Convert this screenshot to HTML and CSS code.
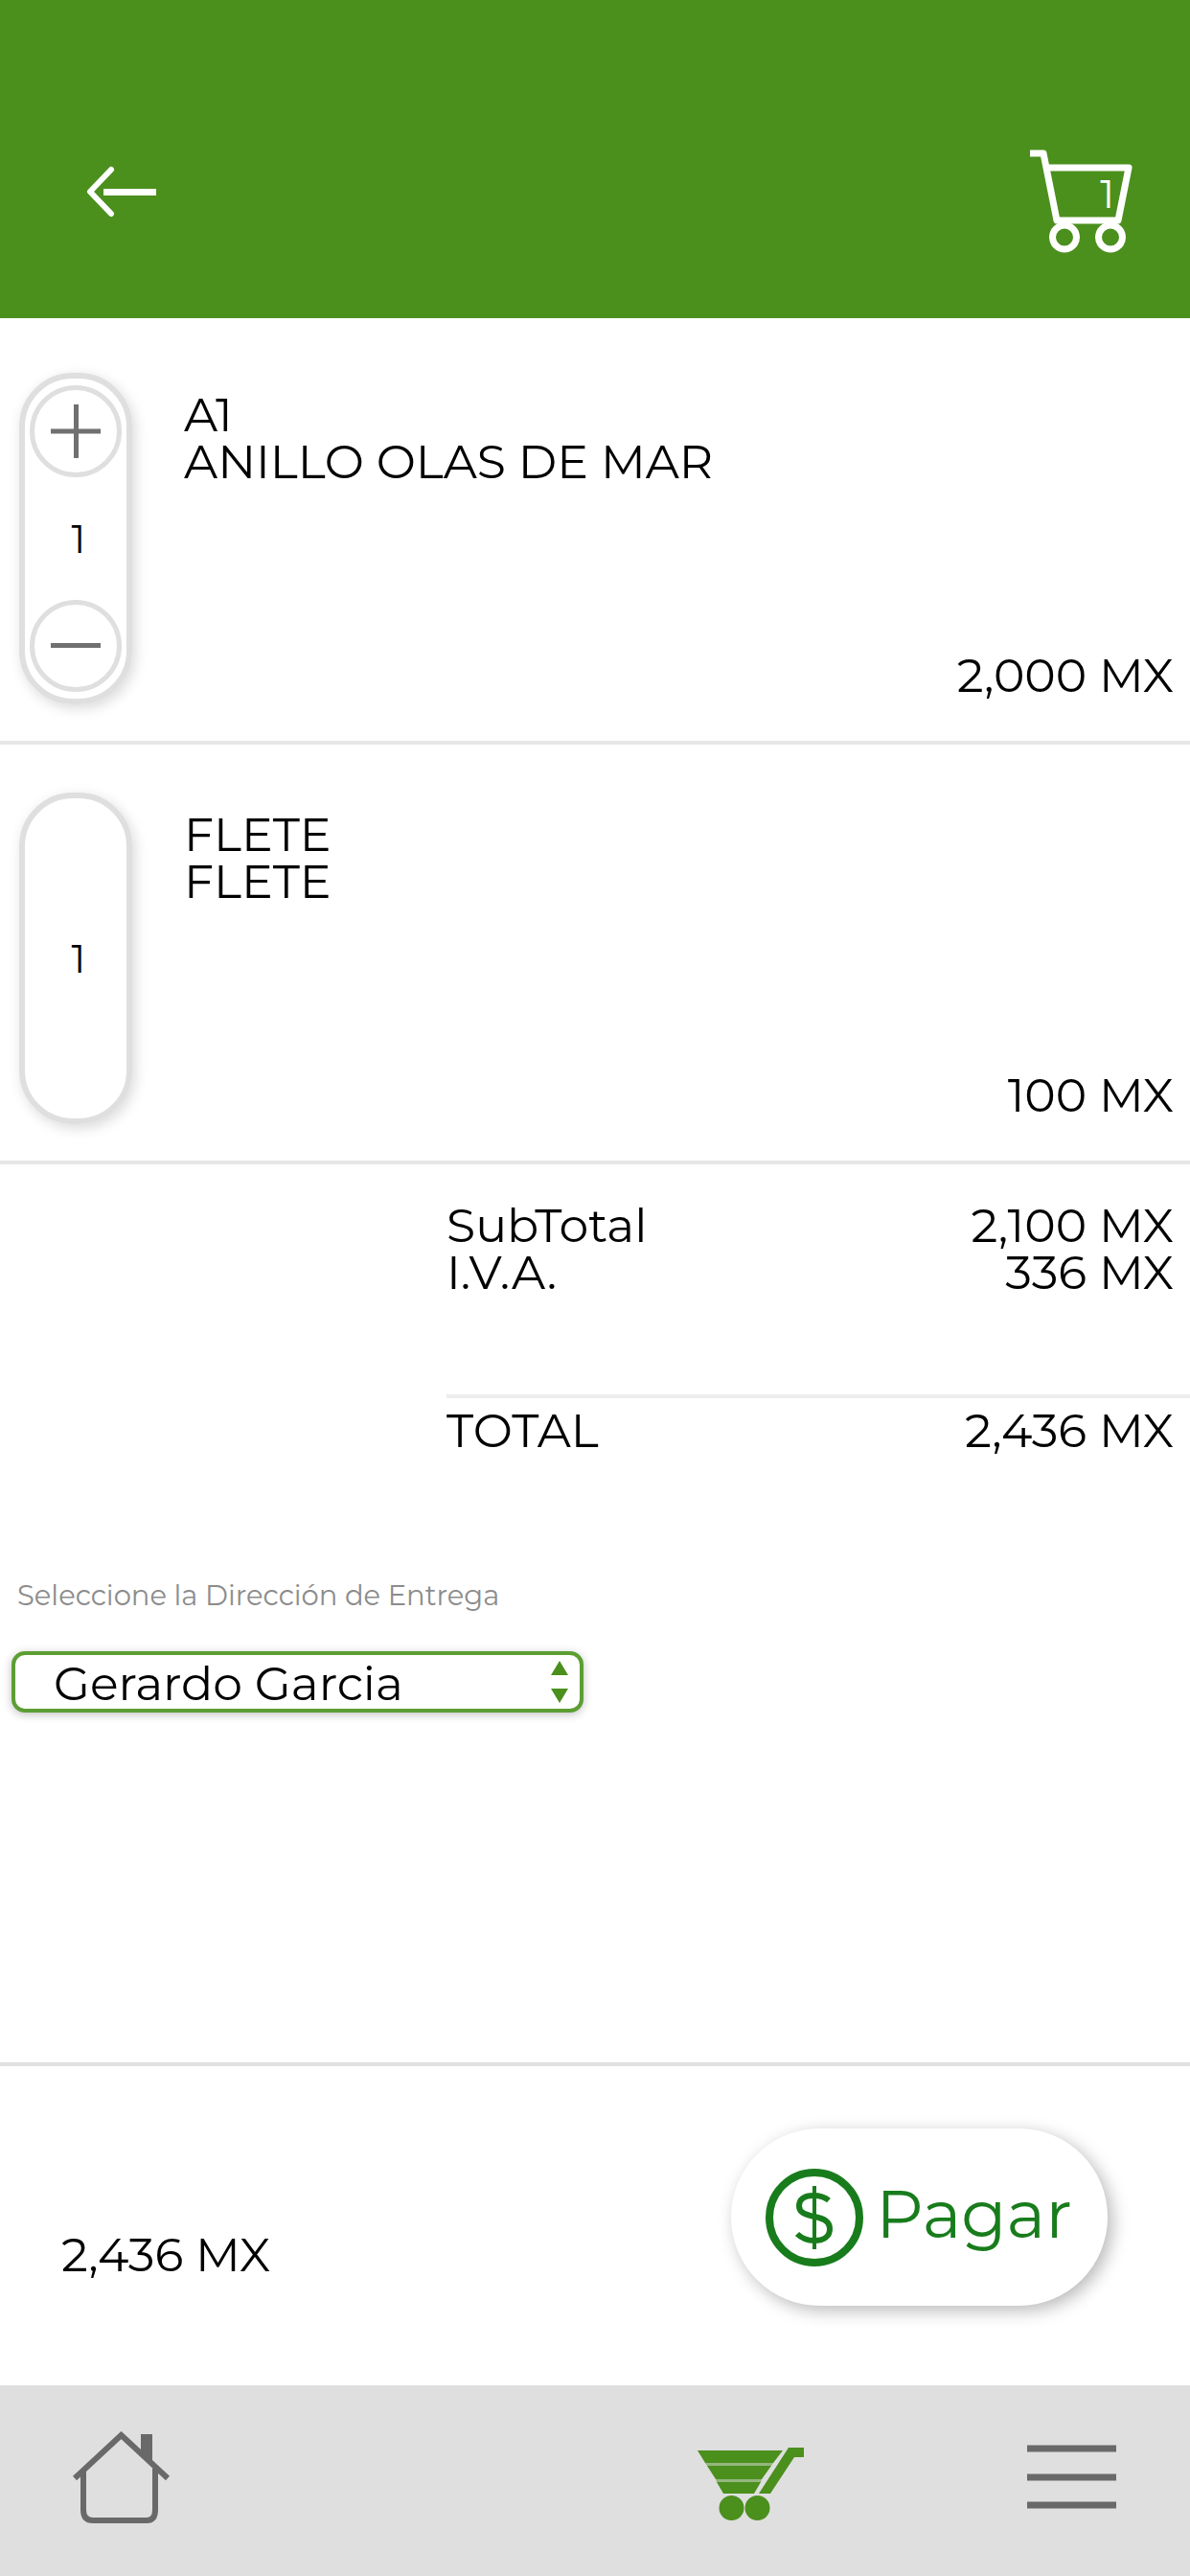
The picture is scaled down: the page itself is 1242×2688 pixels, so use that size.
FILE: index.html
```html
<!DOCTYPE html>
<html lang="es">
    <head>
        <title>Carrito</title>
        <meta charset="UTF-8">
        <meta name="viewport" content="width=device-width, initial-scale=1.0">
        <link rel="stylesheet" href="styles.css">
    </head>
    <body>
        <header class="cabecera">
            <a href="#" class="regresar" aria-label="Regresar">
                <svg width="74" height="54" viewBox="0 0 74 54" fill="none" stroke="#fff">
                    <path d="M26 4L4 27L26 50" stroke-width="6" stroke-linecap="round" stroke-linejoin="round"/>
                    <path d="M18 27.500H73" stroke-width="7"/>
                </svg>
            </a>
            <a href="#" class="carrito" aria-label="Carrito">
                <svg width="108" height="108" viewBox="0 0 108 108" fill="none" stroke="#fff" stroke-width="7" stroke-linejoin="round">
                    <path d="M0 4H14L28 74H92L103 19H18"/>
                    <circle cx="36" cy="91.500" r="12.500"/>
                    <circle cx="84" cy="91.500" r="12.500"/>
                </svg>
                <span class="contador">1</span>
            </a>
        </header>

        <main class="contenido">
            <section class="articulo">
                <div class="cantidad">
                    <button type="button" class="boton" aria-label="Agregar">
                        <svg width="54" height="56" viewBox="0 0 54 56" stroke="#707070" stroke-width="5">
                            <path d="M1 28H53M27.500 0V56"/>
                        </svg>
                    </button>
                    <span class="numero">1</span>
                    <button type="button" class="boton" aria-label="Quitar">
                        <svg width="54" height="56" viewBox="0 0 54 56" stroke="#707070" stroke-width="5">
                            <path d="M1 27.500H53"/>
                        </svg>
                    </button>
                </div>
                <div class="detalle">
                    <div>A1<br>ANILLO OLAS DE MAR</div>
                    <div class="precio">2,000 MX</div>
                </div>
            </section>

            <section class="articulo">
                <div class="cantidad fijo">
                    <span class="numero">1</span>
                </div>
                <div class="detalle">
                    <div>FLETE<br>FLETE</div>
                    <div class="precio">100 MX</div>
                </div>
            </section>

            <section class="totales">
                <div class="renglon"><span>SubTotal</span><span>2,100 MX</span></div>
                <div class="renglon"><span>I.V.A.</span><span>336 MX</span></div>
                <div class="renglon total"><span>TOTAL</span><span>2,436 MX</span></div>
            </section>

            <section class="entrega">
                <label for="direccion">Seleccione la Dirección de Entrega</label>
                <div class="lista">
                    <select id="direccion" name="direccion">
                        <option>Gerardo Garcia</option>
                    </select>
                    <svg class="flechas" width="18" height="44" viewBox="0 0 18 44" fill="#4b8f1d">
                        <path d="M9 0L18 15H0ZM0 29H18L9 44Z"/>
                    </svg>
                </div>
            </section>
        </main>

        <footer class="pago">
            <span class="importe">2,436 MX</span>
            <button type="button" class="pagar">
                <svg width="102" height="102" viewBox="0 0 102 102" fill="none" stroke="#187c1c">
                    <circle cx="51" cy="51" r="47" stroke-width="8"/>
                    <path d="M51 18V84" stroke-width="4"/>
                    <path d="M66 33C61 29 56 28 50 28C40 28 35 32 35 39C35 46 42 48 51 50C61 52 67 55 67 63C67 71 60 75 51 75C44 75 38 73 33 68" stroke-width="6"/>
                </svg>
                <span>Pagar</span>
            </button>
        </footer>

        <nav class="menu">
            <a href="#" aria-label="Inicio">
                <svg width="102" height="96" viewBox="0 0 102 96" fill="none" stroke="#696969" stroke-width="6">
                    <path d="M2 49L50.500 4L99 49"/>
                    <path d="M11 41V82Q11 93 21 93H77Q86 93 86 82V39"/>
                    <path d="M71 3H83V34L71 23Z" fill="#696969" stroke="none"/>
                </svg>
            </a>
            <a href="#" class="actual" aria-label="Carrito">
                <svg width="112" height="76" viewBox="0 0 112 76" fill="#4b8f1d">
                    <path d="M0 3H89L79 16H8ZM10 19H77L67 33H19ZM20 36H66L59 48H27Z"/>
                    <path d="M8 16H79L77 19H10ZM19 33H67L66 36H20Z" opacity="0.5"/>
                    <path d="M95 0H111V10H101L76 48H64Z"/>
                    <circle cx="35.500" cy="63" r="13"/>
                    <circle cx="62.500" cy="63" r="13"/>
                </svg>
            </a>
            <a href="#" class="opciones" aria-label="Menu">
                <svg width="94" height="68" viewBox="0 0 94 68" stroke="#696969" stroke-width="7">
                    <path d="M0 4H93M0 34H93M0 63H93"/>
                </svg>
            </a>
        </nav>
    </body>
</html>
```
FILE: styles.css
```css
* {
    box-sizing: border-box;
}

body {
    margin: 0;
    min-height: 100vh;
    display: flex;
    flex-direction: column;
    background: #fff;
    color: #000;
    font-family: Montserrat, Inter, sans-serif;
    font-size: 49px;
    line-height: 49px;
}

a {
    color: inherit;
    text-decoration: none;
}

button, select {
    font-family: inherit;
    color: inherit;
    cursor: pointer;
}

svg {
    display: block;
}

/* Cabecera */
.cabecera {
    display: flex;
    justify-content: space-between;
    align-items: flex-start;
    padding: 156px 59px 68px 90px;
    background: #4b8f1d;
    color: #fff;
}

.regresar {
    padding-top: 17px;
}

.carrito {
    position: relative;
}

.contador {
    position: absolute;
    top: 22px;
    right: 20px;
    font-size: 41px;
}

/* Articulos */
.contenido {
    flex: 1;
    padding-top: 7px;
}

.articulo {
    display: flex;
    gap: 54px;
    padding: 50px 17px 38px 20px;
    border-bottom: 4px solid #e6e6e6;
}

.cantidad {
    display: flex;
    flex-direction: column;
    align-items: center;
    justify-content: space-between;
    flex: none;
    width: 118px;
    height: 346px;
    padding: 7px 0;
    border: 6px solid #dfdfdf;
    border-radius: 56px;
    box-shadow: 3px 4px 14px rgba(0,0,0,0.15);
    font-size: 41px;
}

.numero {
    padding-left: 6px;
}

.fijo {
    justify-content: center;
}

.boton {
    display: flex;
    align-items: center;
    justify-content: center;
    width: 96px;
    height: 96px;
    padding: 0;
    border: 5px solid #dfdfdf;
    border-radius: 50%;
    background: #fff;
}

.detalle {
    flex: 1;
    display: flex;
    flex-direction: column;
    justify-content: space-between;
    padding: 19px 0 6px;
}

.precio {
    text-align: right;
}

/* Totales */
.totales {
    margin-left: 466px;
    padding-top: 39px;
}

.renglon {
    display: flex;
    justify-content: space-between;
    padding-right: 17px;
}

.total {
    margin-top: 103px;
    padding-top: 9px;
    border-top: 4px solid #ededed;
}

/* Direccion de entrega */
.entrega {
    padding: 130px 12px 40px;
}

.entrega label {
    display: block;
    padding-left: 6px;
    color: #8c8c8c;
    font-size: 29px;
    line-height: 36px;
}

.lista {
    position: relative;
    width: 49%;
    min-width: 460px;
    margin-top: 40px;
}

.lista select {
    display: block;
    width: 100%;
    height: 64px;
    padding: 0 60px 0 40px;
    border: 4px solid #5c9e33;
    border-radius: 14px;
    background: #fff;
    box-shadow: 0 2px 10px rgba(0,0,0,0.25);
    font-size: 49px;
    -webkit-appearance: none;
    appearance: none;
}

.flechas {
    position: absolute;
    top: 10px;
    right: 16px;
    pointer-events: none;
}

/* Pago */
.pago {
    display: flex;
    justify-content: space-between;
    align-items: flex-end;
    padding: 65px 86px 83px 64px;
    border-top: 4px solid #e0e0e0;
}

.importe {
    margin-bottom: 29px;
}

.pagar {
    display: flex;
    align-items: center;
    gap: 13px;
    height: 185px;
    padding: 0 37px 0 36px;
    border: none;
    border-radius: 93px;
    background: #fff;
    box-shadow: 5px 5px 18px rgba(0,0,0,0.28);
    color: #187c1c;
    font-size: 69px;
}

.pagar span {
    padding-bottom: 8px;
}

/* Menu inferior */
.menu {
    display: flex;
    align-items: center;
    height: 199px;
    padding: 0 76px 8px;
    background: #dfdfdf;
}

.actual {
    margin-left: auto;
    padding-top: 14px;
}

.opciones {
    margin-left: 232px;
}
```
